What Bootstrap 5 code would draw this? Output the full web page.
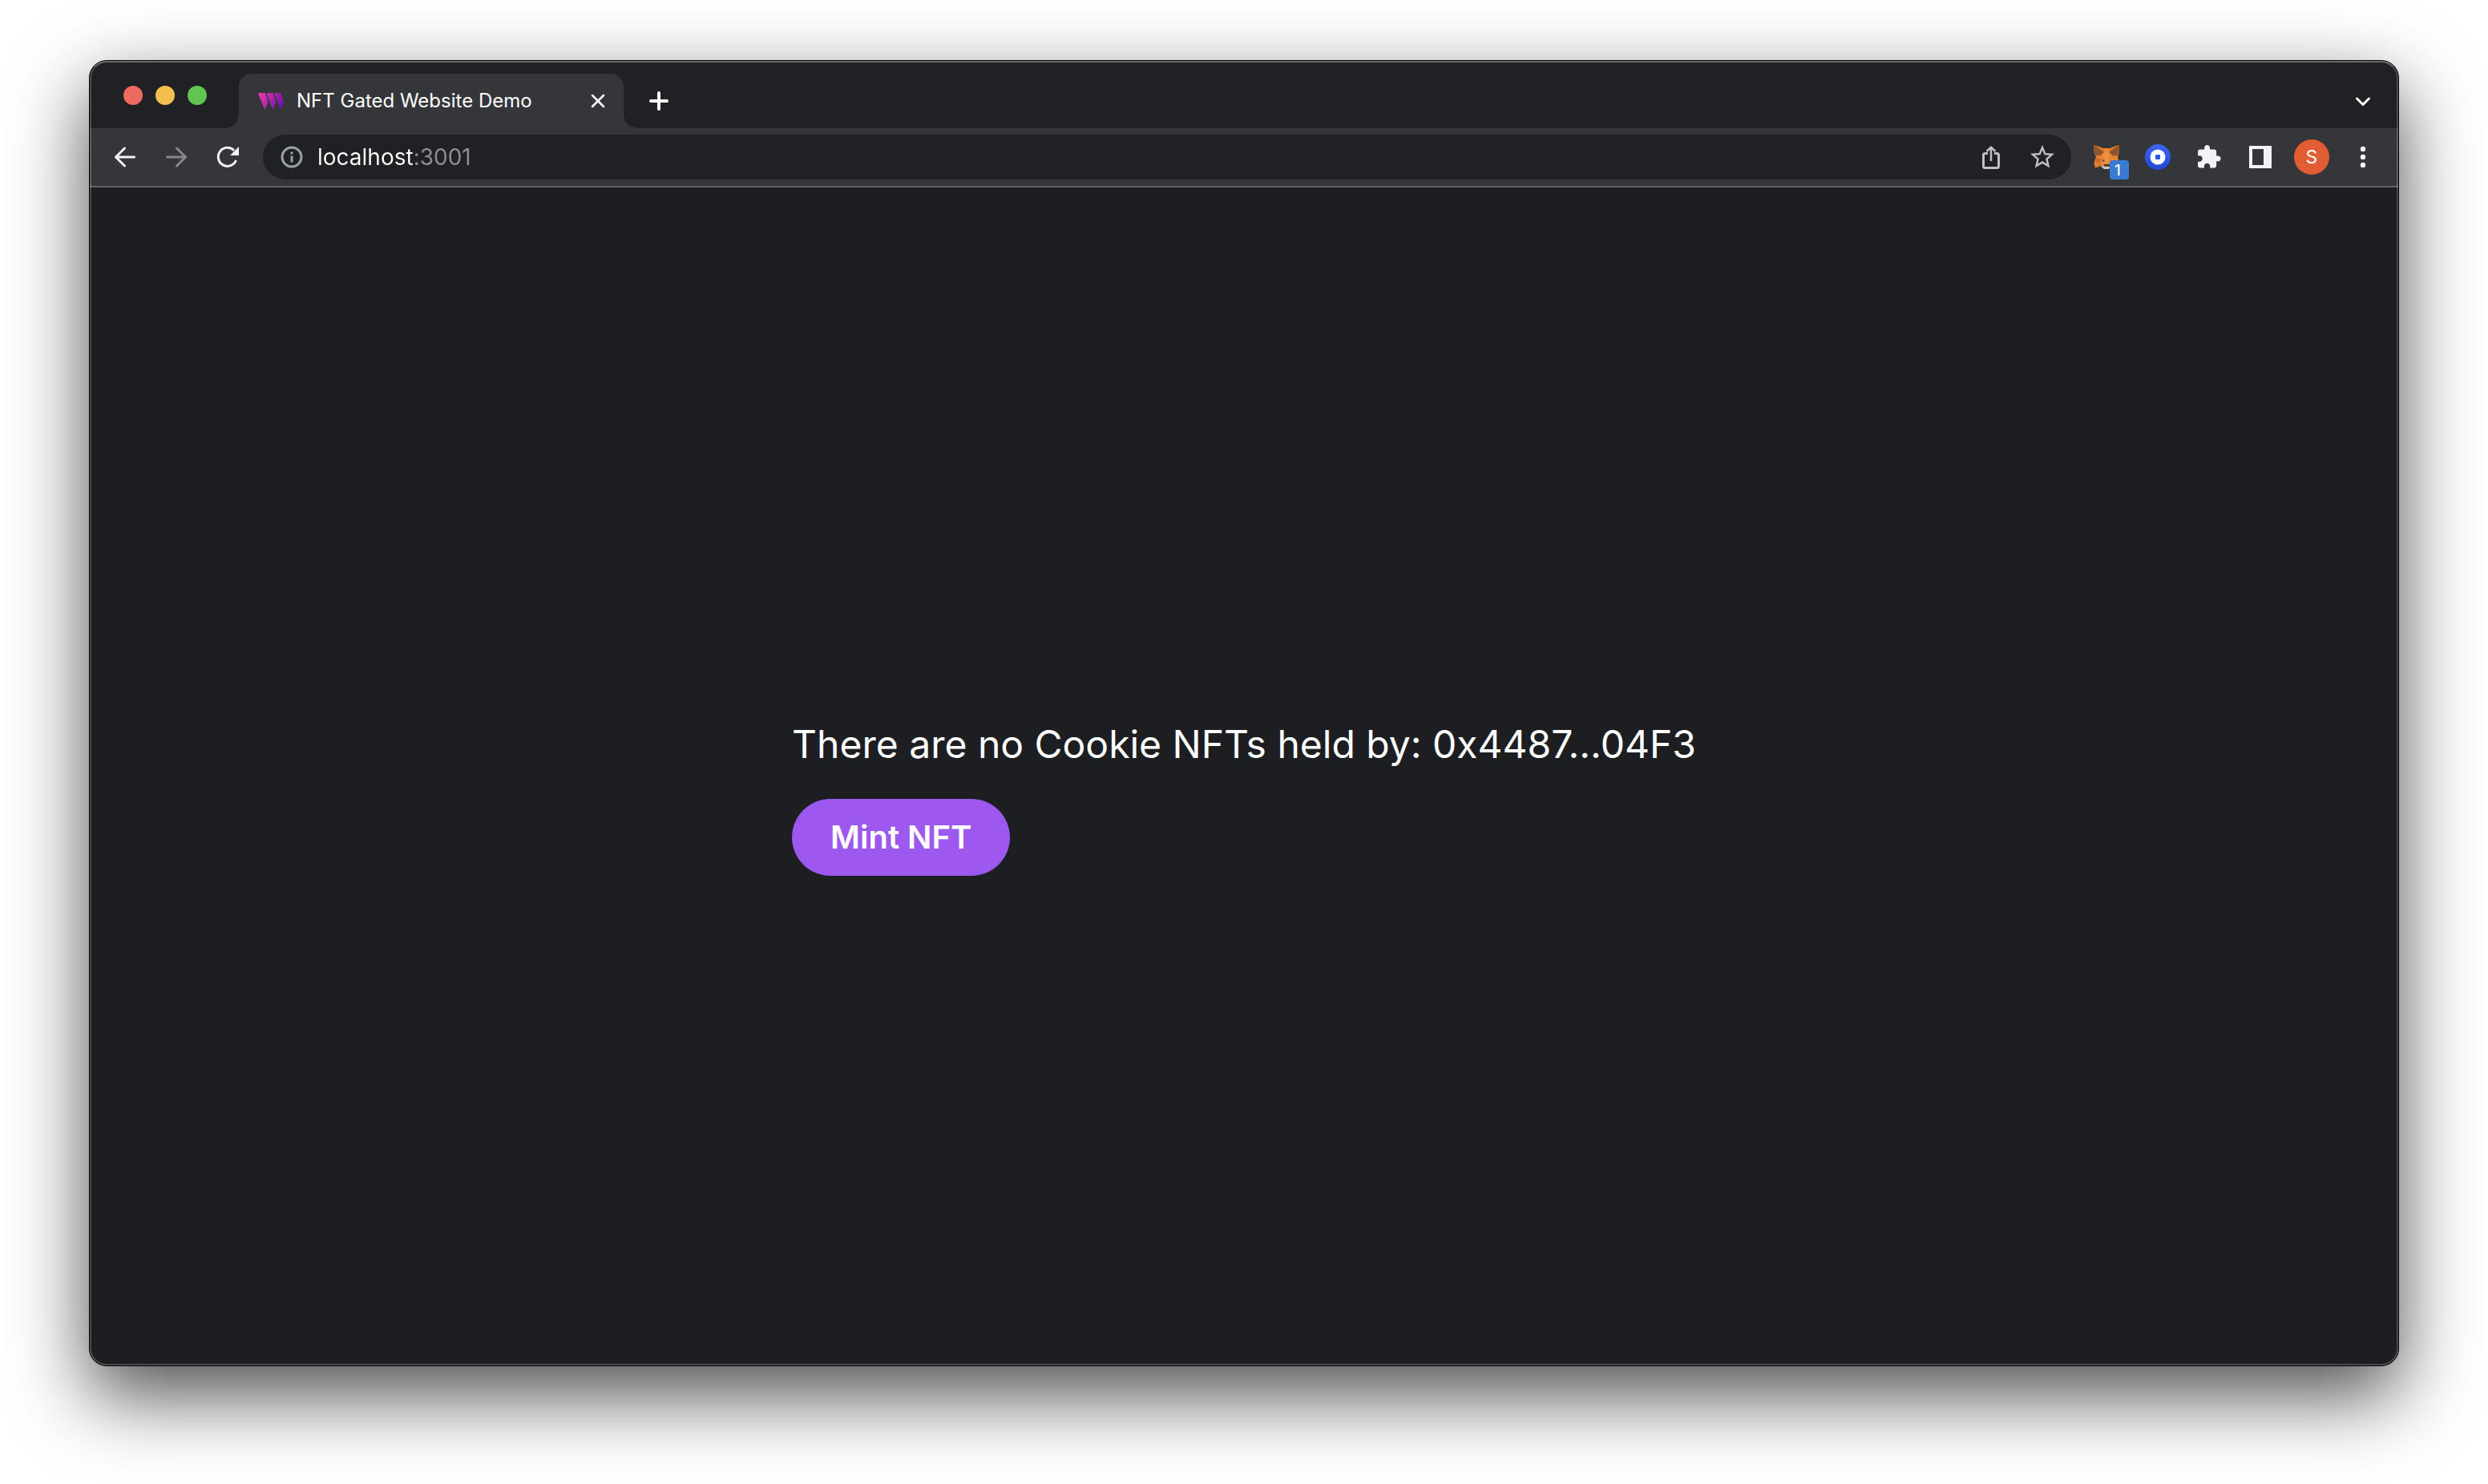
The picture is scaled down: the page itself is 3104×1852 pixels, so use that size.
<!DOCTYPE html>
<html lang="en">
<head>
<meta charset="utf-8">
<meta name="viewport" content="width=device-width, initial-scale=1">
<title>NFT Gated Website Demo</title>
<link href="https://cdn.jsdelivr.net/npm/bootstrap@5.3.0/dist/css/bootstrap.min.css" rel="stylesheet">
<style>
  body { font-family: Inter, "Liberation Sans", sans-serif; background: #fff; padding: 75px 111px 147px; }
  .browser { background: #1d1e22; border: 1px solid #000; border-radius: 22px; box-shadow: 0 36px 96px rgba(0,0,0,.7); }
  .browser::after { content: ""; position: absolute; inset: 0; border: 2px solid rgba(255,255,255,.2); border-top-color: rgba(255,255,255,.34); border-radius: 21px; pointer-events: none; }
  .tab-strip { height: 84px; background: #202124; padding: 0 24px 0 42px; border-radius: 21px 21px 0 0; }
  .lights { gap: 16px; padding-top: 2px; margin-right: 40px; }
  .light { width: 24px; height: 24px; border-radius: 50%; border: 0; padding: 0; }
  .light-close { background: #ed6a5f; }
  .light-min { background: #f5bf4f; }
  .light-max { background: #61c554; }
  .page-tab { width: 480px; height: 68px; padding: 0 20px 0 24px; background: #35363a; border-radius: 16px 16px 0 0; color: #fff; font-size: 24px; line-height: 32px; }
  .page-tab::before, .page-tab::after { content: ""; position: absolute; bottom: 0; width: 16px; height: 16px; }
  .page-tab::before { right: 100%; background: radial-gradient(circle at 0 0, transparent 15px, #35363a 16px); }
  .page-tab::after { left: 100%; background: radial-gradient(circle at 100% 0, transparent 15px, #35363a 16px); }
  .strip-btn { height: 68px; }
  .icon-btn { width: 40px; border: 0; padding: 0; background: none; color: #f1f3f4; flex: none; }
  .icon-btn svg, .favicon, .info-icon { display: block; flex: none; }
  .close-btn { width: 24px; border: 0; padding: 0; background: none; }
  .toolbar { height: 74px; padding: 0 24px; gap: 24px; background: #35363a; border-bottom: 2px solid #5f6063; }
  .address { height: 56px; border-radius: 28px; background: #202124; padding: 0 16px 0 22px; }
  .address input { border: 0; outline: 0; padding: 0; margin: 0 24px 0 18px; min-width: 0; height: 40px; font-size: 28px; line-height: 40px;
    background: linear-gradient(90deg, #fff 120px, #8f9093 120px); -webkit-background-clip: text; background-clip: text; -webkit-text-fill-color: transparent; }
  .address-actions { gap: 24px; }
  .address-actions .icon-btn { color: #bdc1c6; }
  .count-badge { position: absolute; left: 24px; top: 24px; width: 24px; height: 24px; border-radius: 4px; background: #387bd2; color: #fff; font-size: 18px; line-height: 26px; padding-right: 4px; text-align: center; font-weight: 500; }
  .avatar { width: 44px; height: 44px; margin: 0 -2px; border-radius: 50%; border: 0; padding: 0; background: #e25d33; color: #fff; font-size: 23px; line-height: 44px; flex: none; }
  .gate { padding-top: 54px; }
  .gate-text { font-size: 48px; line-height: 60px; margin-bottom: 38px; color: #fff; }
  .mint-btn, .mint-btn:hover { background: #9d59ef; color: #fff; border: 0; border-radius: 48px; padding: 18px 48px; font-size: 40px; line-height: 60px; font-weight: 600; }
</style>
<script src="https://cdn.jsdelivr.net/npm/bootstrap@5.3.0/dist/js/bootstrap.bundle.min.js"></script>
</head>
<body class="d-flex min-vh-100">
<div class="browser position-relative d-flex flex-column flex-grow-1">
  <header>
    <div class="tab-strip d-flex align-items-end">
      <div class="lights d-flex align-items-center align-self-center">
        <button class="light light-close" type="button" aria-label="Close window"></button>
        <button class="light light-min" type="button" aria-label="Minimise window"></button>
        <button class="light light-max" type="button" aria-label="Zoom window"></button>
      </div>
      <div class="page-tab position-relative d-flex align-items-center">
        <svg class="favicon" width="32" height="32" viewBox="0 0 32 32" aria-hidden="true">
          <defs><linearGradient id="brand" gradientUnits="userSpaceOnUse" x1="0" y1="6" x2="32" y2="26"><stop offset="0" stop-color="#f33ba4"/><stop offset="1" stop-color="#5b0fae"/></linearGradient></defs>
          <path fill="url(#brand)" d="M1 6H8Q9 6 9.400 7L12.200 16Q12.500 17 12.200 18L9.600 25Q8.500 27 7.400 25L.3 7.200Q0 6 1 6ZM11.500 6H17.500Q18.500 6 19 7L22 16Q22.400 17 22 18L19.600 25Q18.500 27 17.400 25L10.700 7.200Q10.400 6 11.500 6ZM21.500 6H27Q28 6 28.500 7L31.700 15.500Q32.100 16.500 31.700 17.700L29.500 25Q28.400 27 27.300 25L20.500 7.200Q20.300 6 21.500 6Z"/>
        </svg>
        <span class="ms-3 me-auto text-nowrap">NFT Gated Website Demo</span>
        <button class="close-btn" type="button" aria-label="Close tab"><svg class="d-block" width="24" height="24" viewBox="0 0 24 24" fill="none" stroke="#fff" stroke-width="2.500" stroke-linecap="round"><path d="M5 5 19 19M19 5 5 19"/></svg></button>
      </div>
      <button class="icon-btn strip-btn ms-4" type="button" aria-label="New tab"><svg width="40" height="40" viewBox="0 0 40 40" fill="none" stroke="#fff" stroke-width="4" stroke-linecap="round"><path d="M20 10V30M10 20H30"/></svg></button>
      <button class="icon-btn strip-btn ms-auto" type="button" aria-label="Search tabs"><svg width="40" height="40" viewBox="0 0 40 40" fill="none" stroke="#fff" stroke-width="3" stroke-linecap="round" stroke-linejoin="round"><path d="M12.500 17 20 24.500 27.500 17"/></svg></button>
    </div>

    <div class="toolbar d-flex align-items-center">
      <button class="icon-btn" type="button" aria-label="Back"><svg width="40" height="40" viewBox="0 0 40 40" fill="none" stroke="currentColor" stroke-width="3" stroke-linecap="round" stroke-linejoin="round"><path d="M31.500 20H8.500M19.500 9 8.500 20 19.500 31"/></svg></button>
      <button class="icon-btn" type="button" aria-label="Forward"><svg width="40" height="40" viewBox="0 0 40 40" fill="none" stroke="#87888a" stroke-width="3" stroke-linecap="round" stroke-linejoin="round"><path d="M8.500 20H31.500M20.500 9 31.500 20 20.500 31"/></svg></button>
      <button class="icon-btn" type="button" aria-label="Reload"><svg width="40" height="40" viewBox="0 0 40 40"><path d="M30.500 24A11.500 11.500 0 1 1 28 11.800" fill="none" stroke="currentColor" stroke-width="3"/><path d="M34 7V18H23Z" fill="currentColor"/></svg></button>

      <div class="address d-flex align-items-center flex-grow-1">
        <svg class="info-icon" width="28" height="28" viewBox="0 0 28 28" aria-hidden="true"><circle cx="14" cy="14" r="12" fill="none" stroke="#9aa0a6" stroke-width="3"/><path d="M12.500 7.500H15.500V10.500H12.500ZM12.500 12.500H15.500V20.500H12.500Z" fill="#9aa0a6"/></svg>
        <input class="flex-grow-1" type="text" value="localhost:3001" aria-label="Address">
        <div class="address-actions d-flex">
          <button class="icon-btn" type="button" aria-label="Share"><svg width="40" height="40" viewBox="0 0 40 40" fill="none" stroke="currentColor" stroke-width="3"><path d="M16 15.500H12.500Q10.500 15.500 10.500 17.500V31.500Q10.500 33.500 12.500 33.500H27.500Q29.500 33.500 29.500 31.500V17.500Q29.500 15.500 27.500 15.500H24"/><path d="M20 25V9M14.500 13 20 7.800 25.500 13" stroke-width="2.500"/></svg></button>
          <button class="icon-btn" type="button" aria-label="Bookmark this page"><svg width="40" height="40" viewBox="0 0 40 40"><path transform="translate(2 2) scale(1.500)" fill="currentColor" d="M22 9.240l-7.190-.62L12 2 9.190 8.630 2 9.240l5.460 4.730L5.820 21 12 17.270 18.180 21l-1.630-7.030L22 9.240zM12 15.400l-3.760 2.270 1-4.280-3.320-2.880 4.380-.38L12 6.100l1.710 4.040 4.380.38-3.320 2.880 1 4.280L12 15.400z"/></svg></button>
        </div>
      </div>

      <button class="icon-btn position-relative" type="button" aria-label="Wallet extension">
        <svg width="40" height="40" viewBox="0 0 40 40">
          <path fill="#e8853a" d="M4.500 5 15 9H25L35.500 5 36 13 34 20 35.500 27 33 33 27 31 23 34H17L13 31 6 33.500 4.500 27 7 20 4 13Z"/>
          <path fill="#8e5630" d="M4.500 5 17 13.500 12 18.500 6.500 18 4 13ZM35.500 5 23 13.500 28 18.500 33.500 18 36 13Z"/>
          <path fill="#e2761b" d="M4.500 5 16 9 17.500 14ZM35.500 5 24 9 22.500 14Z"/>
          <path fill="#f18f3a" d="M17 13.500H23L24 26 20 30 16 26Z"/>
          <path fill="#d06f2c" d="M4.500 27 7 20 14 23 11 28ZM6 33.500 11 28 14 29.500 13 31Z"/>
          <path fill="#3a3734" d="M13.500 22.500 17.500 24.500 17 26ZM17 29H24V32H16.500Z"/>
          <path fill="#d8c5b8" d="M12.500 31 17 31.500 25 32 23 35H17Z"/>
        </svg>
        <span class="count-badge">1</span>
      </button>
      <button class="icon-btn" type="button" aria-label="Coin wallet extension"><svg width="40" height="40" viewBox="0 0 40 40"><defs><linearGradient id="coin" x2="0" y2="1"><stop stop-color="#3b66f0"/><stop offset="1" stop-color="#2148d8"/></linearGradient></defs><circle cx="20" cy="20" r="16" fill="url(#coin)"/><circle cx="20" cy="20" r="9.500" fill="#fff"/><rect x="17" y="17" width="6" height="6" rx="1" fill="#2b55e4"/></svg></button>
      <button class="icon-btn" type="button" aria-label="Extensions"><svg width="40" height="40" viewBox="0 0 40 40"><path transform="translate(3.300 3.600) scale(1.360)" fill="currentColor" d="M20.500 11H19V7c0-1.100-.9-2-2-2h-4V3.500C13 2.120 11.880 1 10.500 1S8 2.120 8 3.500V5H4c-1.100 0-1.990.9-1.990 2v3.800H3.500c1.490 0 2.700 1.210 2.700 2.700s-1.210 2.700-2.700 2.700H2V20c0 1.100.9 2 2 2h3.800v-1.500c0-1.490 1.210-2.700 2.700-2.700 1.490 0 2.700 1.210 2.700 2.700V22H17c1.100 0 2-.9 2-2v-4h1.500c1.380 0 2.500-1.120 2.500-2.500S21.880 11 20.500 11z"/></svg></button>
      <button class="icon-btn" type="button" aria-label="Side panel"><svg width="40" height="40" viewBox="0 0 40 40"><path fill="currentColor" fill-rule="evenodd" d="M6 6H34V34H6ZM10 10V30H24V10Z"/></svg></button>
      <button class="avatar" type="button" aria-label="Profile S">S</button>
      <button class="icon-btn" type="button" aria-label="Menu"><svg width="40" height="40" viewBox="0 0 40 40" fill="currentColor"><circle cx="20" cy="10" r="3.200"/><circle cx="20" cy="20" r="3.200"/><circle cx="20" cy="30" r="3.200"/></svg></button>
    </div>
  </header>

  <main class="gate flex-grow-1 d-flex align-items-center justify-content-center">
    <div>
      <p class="gate-text">There are no Cookie NFTs held by: 0x4487...04F3</p>
      <button class="btn mint-btn d-block" type="button">Mint NFT</button>
    </div>
  </main>
</div>
</body>
</html>
